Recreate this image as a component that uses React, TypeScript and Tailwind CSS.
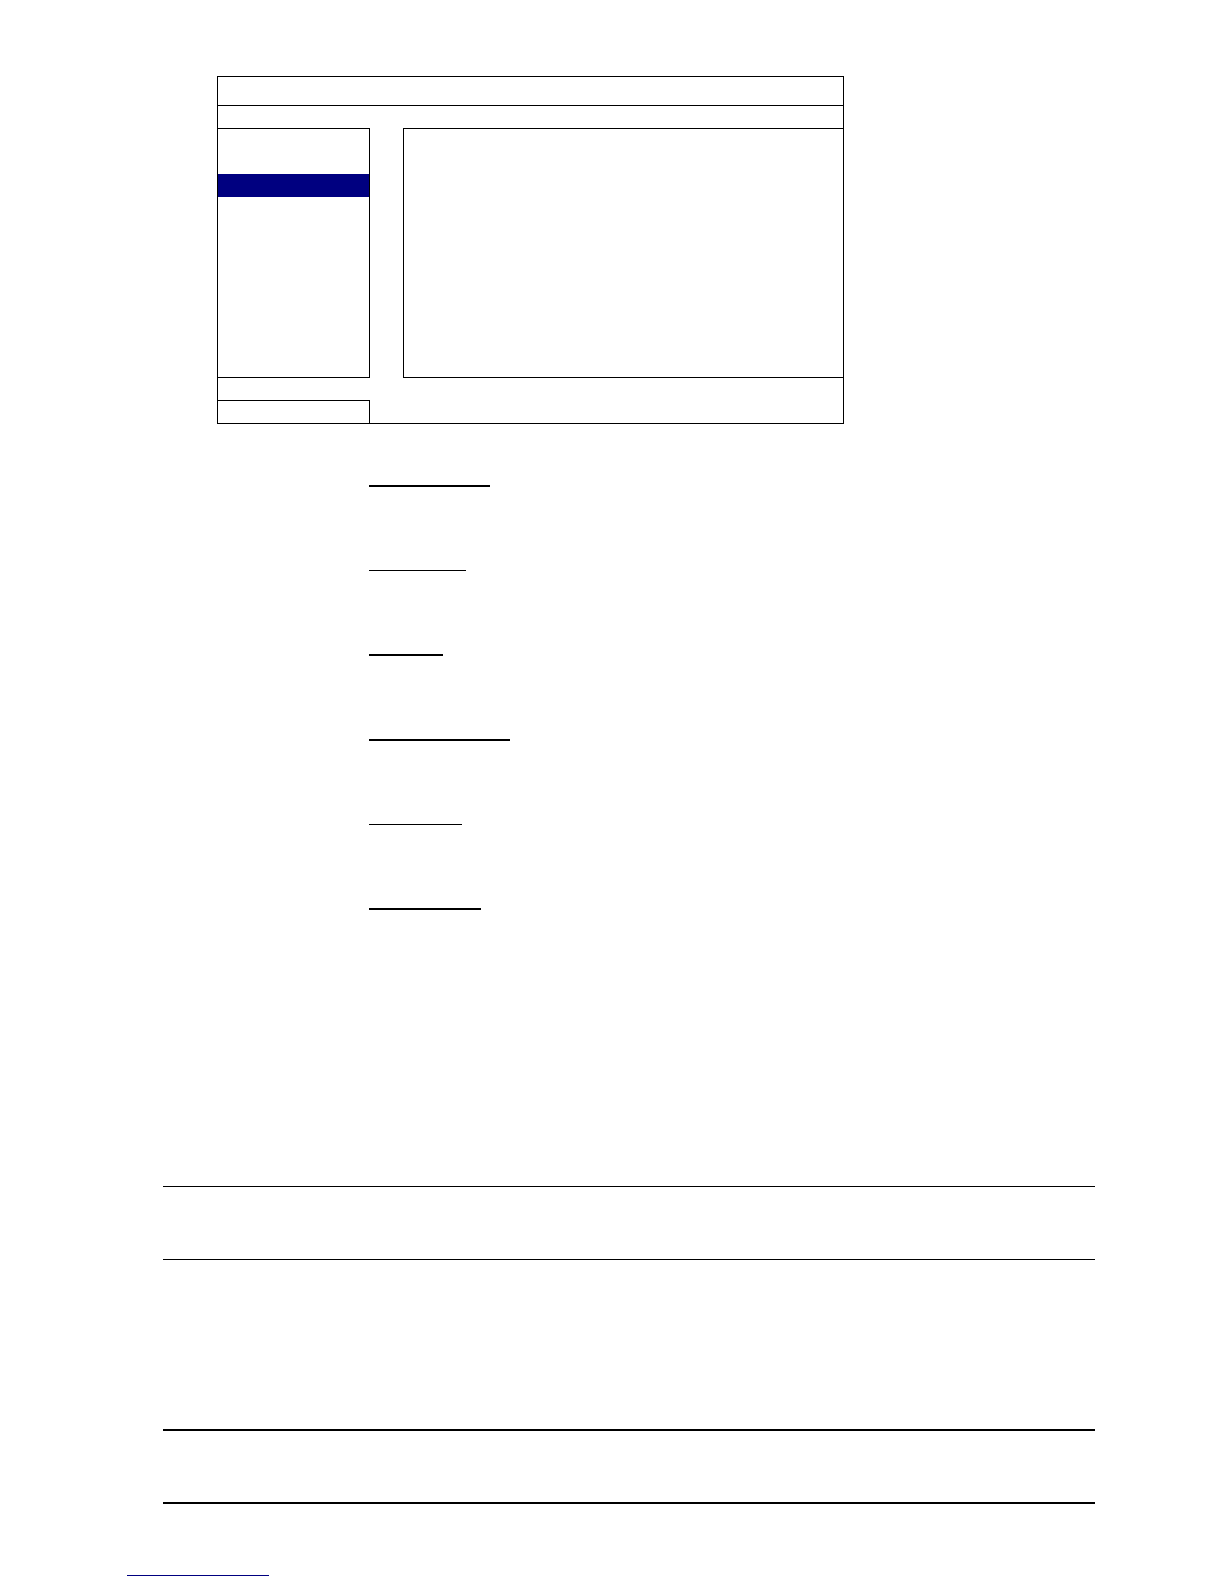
// Underlined headings of the option list, with the width and weight of each line
const TERMS = [
  { id: 1, line: 'w-[121px] h-0.5' },
  { id: 2, line: 'w-[97px] h-px' },
  { id: 3, line: 'w-[74px] h-0.5' },
  { id: 4, line: 'w-[141px] h-0.5' },
  { id: 5, line: 'w-[93px] h-px' },
  { id: 6, line: 'w-28 h-0.5' },
]

function MenuBox() {
  return (
    <section className="ml-[54px] max-w-[627px] border border-black">
      {/* Title bar */}
      <div className="h-[29px] border-b border-black" />
      <div className="h-[22px]" />

      <div className="flex h-[250px]">
        {/* Side menu */}
        <ul className="w-[152px] border-y border-r border-black pt-[45px]">
          <li className="h-[23px] bg-[#000080]" />
        </ul>
        {/* Content panel */}
        <div className="ml-[33px] flex-1 border-y border-l border-black" />
      </div>

      <div className="h-[22px]" />
      <div className="h-[23px] w-[152px] border-t border-r border-black" />
    </section>
  )
}

function TermList() {
  return (
    <ul className="mt-[61px] ml-[206px] flex flex-col gap-[83px]">
      {TERMS.map(term => (
        <li key={term.id} className={`bg-black ${term.line}`} />
      ))}
    </ul>
  )
}

export default function App() {
  return (
    <div className="bg-white font-['Liberation_Sans',sans-serif]">
      <main className="pt-[76px] pr-[129px] pl-[163px]">
        <MenuBox />
        <TermList />

        {/* Note blocks */}
        <div className="mt-[276px] h-[74px] border-y border-black" />
        <div className="mt-[169px] h-[75px] border-y-2 border-black" />
      </main>

      <footer className="mt-[71px] ml-[127px] pb-2">
        <a href="#top" aria-label="Back to top" className="block w-[142px] border-b border-[#000080]" />
      </footer>
    </div>
  )
}
